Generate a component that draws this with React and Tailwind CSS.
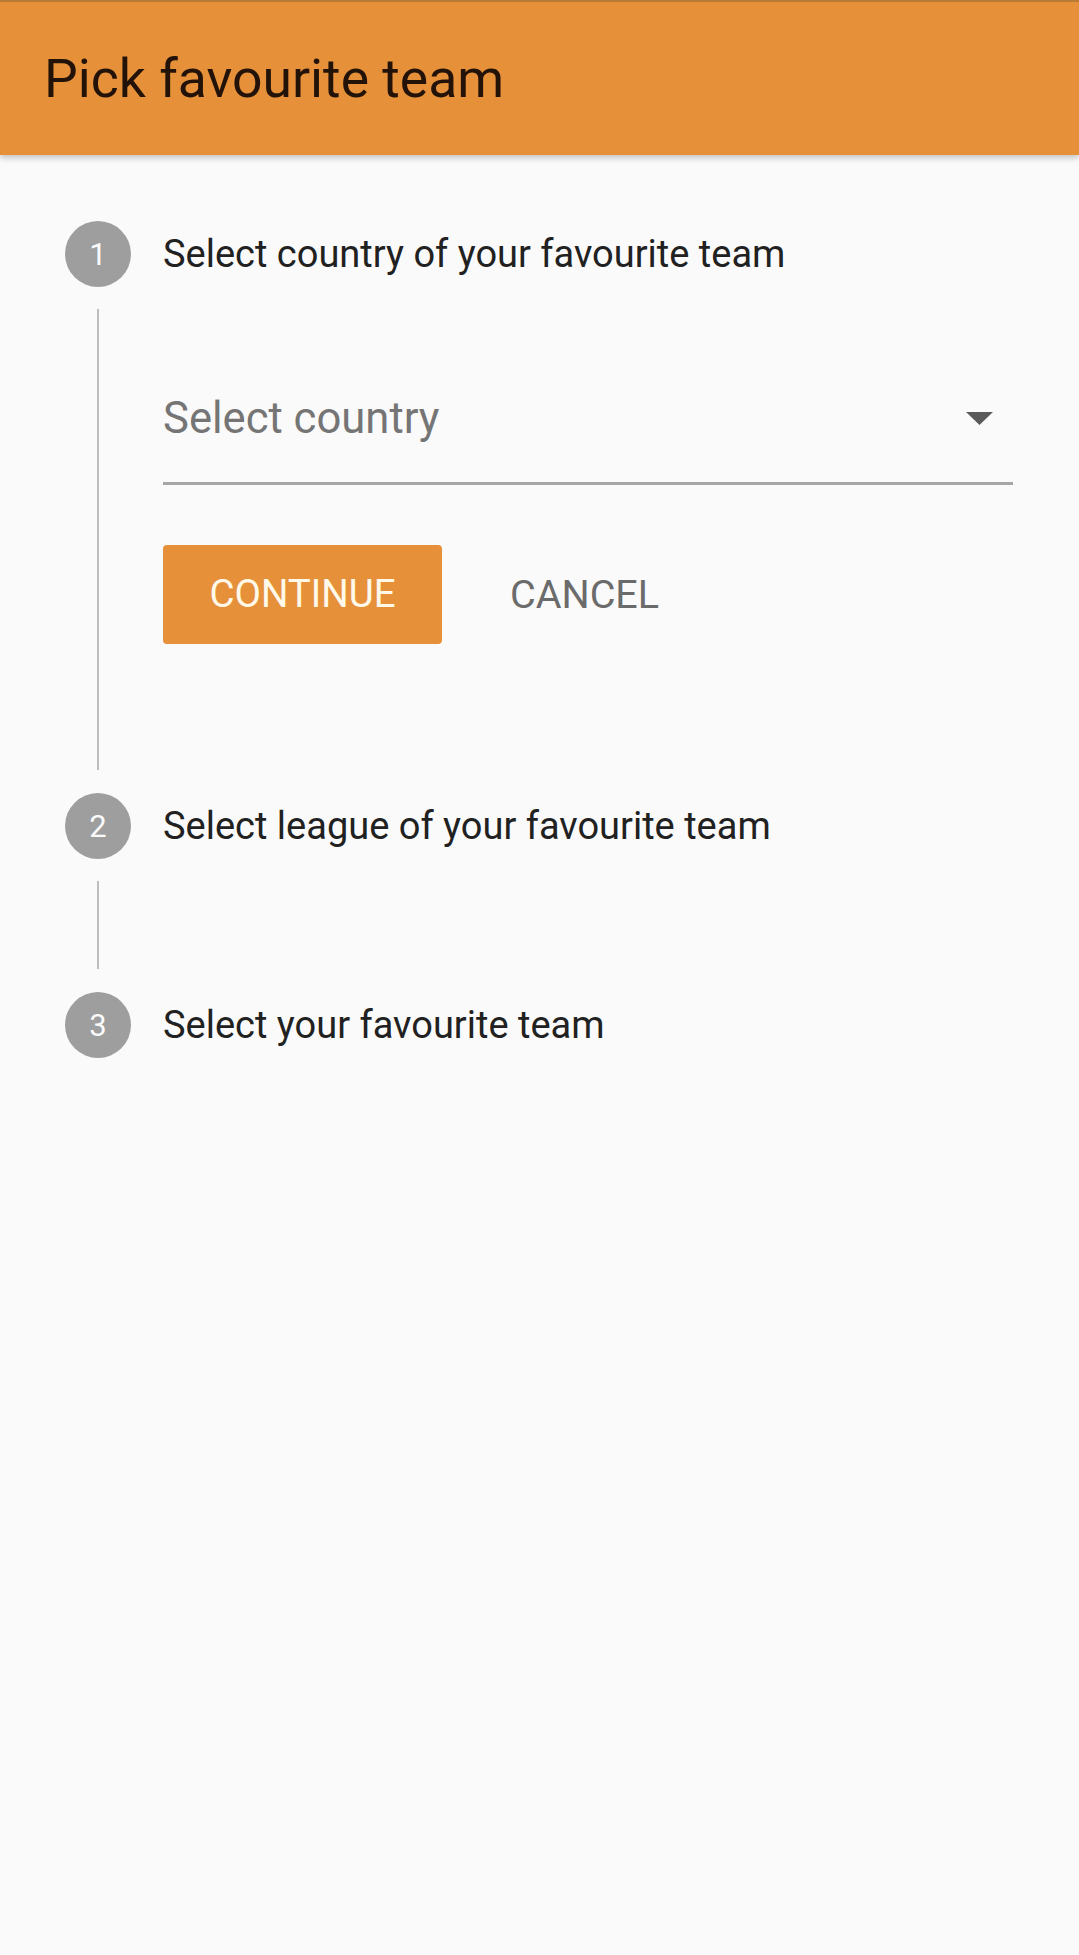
const STEPS = [
  { n: 1, label: 'Select country of your favourite team' },
  { n: 2, label: 'Select league of your favourite team' },
  { n: 3, label: 'Select your favourite team' },
]

function StepHead({ n, label }) {
  return (
    <div className="flex items-center h-[66px] pl-[65px]">
      <div className="w-[66px] h-[66px] rounded-full bg-[#9e9e9e] flex items-center justify-center text-[#fafafa] text-[31px] leading-none">
        {n}
      </div>
      <span className="ml-[32px] text-[38px] text-[#212121] leading-none">{label}</span>
    </div>
  )
}

function Connector({ children }) {
  return (
    <div className="flex pl-[65px]">
      <div className="w-[66px] flex justify-center shrink-0">
        <div className="w-[2px] bg-[#bdbdbd] mt-[22px] mb-[23px]" />
      </div>
      <div className="ml-[32px] flex-1 pr-[66px]">{children}</div>
    </div>
  )
}

export default function App() {
  return (
    <div className="min-h-[1955px] bg-[#fafafa] font-['Roboto',sans-serif]">
      <header className="h-[155px] bg-[#e6913a] border-t-2 border-[#b97a35] flex items-center pl-[44px] shadow-[0_3px_6px_rgba(0,0,0,0.22)]">
        <h1 className="text-[53.5px] text-[#221208] font-normal leading-none">Pick favourite team</h1>
      </header>

      <div className="pt-[66px]">
        <StepHead {...STEPS[0]} />
        <Connector>
          <div className="pt-[68px] pb-[149px]">
            <div className="h-[130px] border-b-[3px] border-[#a6a6a6] flex items-center justify-between pr-[20px]">
              <span className="text-[43.6px] text-[#757575] leading-none">Select country</span>
              <svg width="27" height="13" viewBox="0 0 27 13">
                <polygon points="0,0 27,0 13.5,13" fill="#5a5a5a" />
              </svg>
            </div>
            <div className="mt-[60px] flex items-center">
              <button className="h-[99px] w-[279px] rounded-[4px] bg-[#e6913a] text-[#fff9ea] text-[38.5px] leading-none">
                CONTINUE
              </button>
              <button className="ml-[68px] text-[39.5px] text-[#6b6b6b] leading-none">CANCEL</button>
            </div>
          </div>
        </Connector>
        <StepHead {...STEPS[1]} />
        <Connector>
          <div className="h-[133px]" />
        </Connector>
        <StepHead {...STEPS[2]} />
      </div>
    </div>
  )
}
